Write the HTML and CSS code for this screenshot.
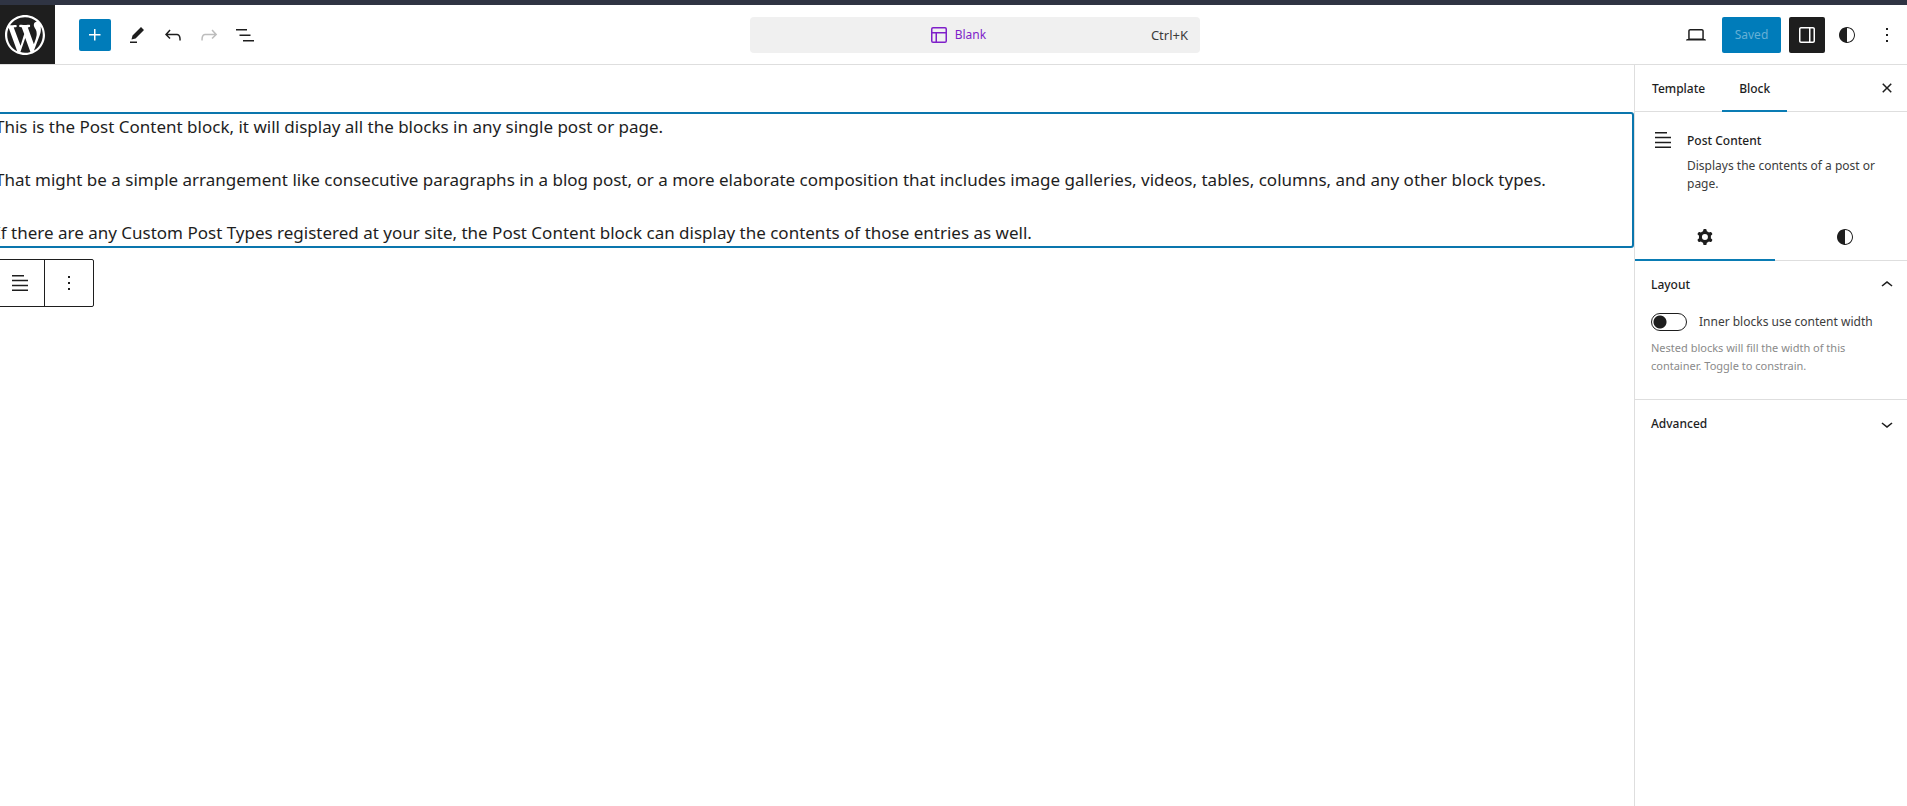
FILE: index.html
```html
<!DOCTYPE html>
<html lang="en">
<head>
<meta charset="utf-8">
<title>Blank</title>
<link rel="stylesheet" href="styles.css">
</head>
<body>
<div class="editor">
  <header class="header">
    <a class="site-hub" href="#" aria-label="Open navigation">
      <svg class="site-logo" viewBox="-2 -2 24 24"><path d="M20 10c0-5.51-4.49-10-10-10C4.48 0 0 4.49 0 10c0 5.52 4.48 10 10 10 5.51 0 10-4.48 10-10zM7.78 15.37L4.37 6.22c.55-.02 1.17-.08 1.17-.08.5-.06.44-1.13-.06-1.11 0 0-1.45.11-2.37.11-.18 0-.37 0-.58-.01C4.12 2.69 6.87 1.11 10 1.11c2.33 0 4.45.87 6.05 2.34-.68-.11-1.65.39-1.65 1.58 0 .74.45 1.36.9 2.1.35.61.55 1.36.55 2.46 0 1.49-1.4 5-1.4 5l-3.03-8.37c.54-.02.82-.17.82-.17.5-.05.44-1.25-.06-1.22 0 0-1.44.12-2.38.12-.87 0-2.33-.12-2.33-.12-.5-.03-.56 1.2-.06 1.22l.92.08 1.26 3.41zM17.41 10c.24-.64.74-1.87.43-4.25.7 1.29 1.05 2.71 1.05 4.25 0 3.29-1.73 6.24-4.4 7.78.97-2.59 1.94-5.2 2.92-7.78zM6.1 18.09C3.12 16.65 1.11 13.53 1.11 10c0-1.3.23-2.48.72-3.59C3.25 10.3 4.67 14.2 6.1 18.09zm4.03-6.63l2.58 6.98c-.86.29-1.76.45-2.71.45-.79 0-1.57-.11-2.29-.33.81-2.38 1.62-4.74 2.42-7.1z"/></svg>
    </a>
    <div class="tools">
      <button class="inserter" aria-label="Toggle block inserter"><svg class="icon" viewBox="0 0 24 24"><path d="M11 12.5V17.5H12.5V12.5H17.5V11H12.5V6H11V11H6V12.5H11Z"/></svg></button>
      <div class="tool-group">
        <button class="icon-button" aria-label="Tools"><svg class="icon" viewBox="0 0 24 24"><path d="m19 7-3-3-8.5 8.5-1 4 4-1L19 7Zm-7 11.5H5V20h7v-1.5Z"/></svg></button>
        <button class="icon-button" aria-label="Undo"><svg class="icon" viewBox="0 0 24 24"><path d="M18.3 11.7c-.6-.6-1.4-.9-2.3-.9H6.7l2.9-3.3-1.1-1-4.5 5L8.5 16l1-1-2.7-2.7H16c.5 0 .9.2 1.3.5 1 1 1 3.4 1 4.5v.3h1.5v-.2c0-1.5 0-4.3-1.5-5.7z"/></svg></button>
        <button class="icon-button" aria-label="Redo" disabled><svg class="icon" viewBox="0 0 24 24"><path d="M15.6 6.5l-1.1 1 2.9 3.3H8c-.9 0-1.7.3-2.3.9-1.4 1.5-1.4 4.2-1.4 5.6v.2h1.5v-.3c0-1.1 0-3.5 1-4.5.3-.3.7-.5 1.3-.5h9.2L14.5 15l1.1 1.1 4.6-4.6-4.6-5z"/></svg></button>
        <button class="icon-button" aria-label="List view"><svg class="icon" viewBox="0 0 24 24"><path d="M3 6h11v1.5H3V6Zm3.5 5.5h11V13h-11v-1.5ZM21 17H10v1.5h11V17Z"/></svg></button>
      </div>
    </div>
    <button class="command">
      <span class="command-title">
        <svg class="icon" viewBox="0 0 24 24"><path d="M18 5.5H6a.5.5 0 00-.5.5v3h13V6a.5.5 0 00-.5-.5zm.5 5H10v8h8a.5.5 0 00.5-.5v-7.5zm-10 0h-3V18a.5.5 0 00.5.5h2.5v-8zM6 4h12a2 2 0 012 2v12a2 2 0 01-2 2H6a2 2 0 01-2-2V6a2 2 0 012-2z"/></svg>
        <span>Blank</span>
      </span>
      <span class="shortcut">Ctrl+K</span>
    </button>
    <div class="actions">
      <button class="icon-button" aria-label="View"><svg class="icon" viewBox="0 0 24 24"><path d="M20.5 16h-.7V8c0-1.1-.9-2-2-2H6.2c-1.1 0-2 .9-2 2v8h-.7c-.8 0-1.5.7-1.5 1.5h20c0-.8-.7-1.5-1.5-1.5zM5.7 8c0-.3.2-.5.5-.5h11.6c.3 0 .5.2.5.5v7.6H5.7V8z"/></svg></button>
      <button class="save" disabled>Saved</button>
      <button class="icon-button pressed" aria-label="Settings" aria-pressed="true"><svg class="icon" viewBox="0 0 24 24"><path d="M18 4H6c-1.1 0-2 .9-2 2v12c0 1.1.9 2 2 2h12c1.1 0 2-.9 2-2V6c0-1.1-.9-2-2-2zm-4 14.5H6c-.3 0-.5-.2-.5-.5V6c0-.3.2-.5.5-.5h8v13zm4.5-.5c0 .3-.2.5-.5.5h-2.5v-13H18c.3 0 .5.2.5.5v12z"/></svg></button>
      <button class="icon-button" aria-label="Styles"><svg class="icon" viewBox="0 0 24 24"><path d="M12 4c-4.4 0-8 3.6-8 8v.1c0 4.1 3.2 7.5 7.2 7.9h.8c4.4 0 8-3.6 8-8s-3.6-8-8-8zm0 15V5c3.9 0 7 3.1 7 7s-3.1 7-7 7z"/></svg></button>
      <button class="icon-button" aria-label="Options"><svg class="icon" viewBox="0 0 24 24"><path d="M13 19h-2v-2h2v2zm0-6h-2v-2h2v2zm0-6h-2V5h2v2z"/></svg></button>
    </div>
  </header>
  <div class="body">
    <main class="canvas">
      <div class="post-content">
        <p>This is the Post Content block, it will display all the blocks in any single post or page.</p>
        <p>That might be a simple arrangement like consecutive paragraphs in a blog post, or a more elaborate composition that includes image galleries, videos, tables, columns, and any other block types.</p>
        <p>If there are any Custom Post Types registered at your site, the Post Content block can display the contents of those entries as well.</p>
      </div>
      <div class="block-toolbar">
        <button class="toolbar-button" aria-label="Post Content"><svg class="icon" viewBox="0 0 24 24"><path d="M4 20h16v-1.5H4V20zm0-4.8h16v-1.5H4v1.5zm0-6.4v1.5h16V8.8H4zM16 4H4v1.5h12V4z"/></svg></button>
        <button class="toolbar-button" aria-label="Options"><svg class="icon" viewBox="0 0 24 24"><path d="M13 19h-2v-2h2v2zm0-6h-2v-2h2v2zm0-6h-2V5h2v2z"/></svg></button>
      </div>
    </main>
    <aside class="sidebar">
      <div class="sidebar-header">
        <div class="tabs">
          <button class="tab">Template</button>
          <button class="tab active">Block</button>
        </div>
        <button class="icon-button" aria-label="Close Settings"><svg class="icon" viewBox="0 0 24 24"><path d="M12 13.06l3.712 3.713 1.061-1.06L13.061 12l3.712-3.712-1.06-1.06L12 10.938 8.288 7.227l-1.061 1.06L10.939 12l-3.712 3.712 1.06 1.061L12 13.061z"/></svg></button>
      </div>
      <section class="card">
        <svg class="icon" viewBox="0 0 24 24"><path d="M4 20h16v-1.5H4V20zm0-4.8h16v-1.5H4v1.5zm0-6.4v1.5h16V8.8H4zM16 4H4v1.5h12V4z"/></svg>
        <div class="card-text">
          <h2 class="title">Post Content</h2>
          <p class="description">Displays the contents of a post or page.</p>
        </div>
      </section>
      <div class="icon-tabs">
        <button class="icon-tab active" aria-label="Settings"><svg class="icon" viewBox="0 0 24 24"><path fill-rule="evenodd" d="M10.289 4.836A1 1 0 0111.275 4h1.306a1 1 0 01.987.836l.244 1.466c.787.26 1.503.679 2.108 1.218l1.393-.522a1 1 0 011.216.437l.653 1.13a1 1 0 01-.23 1.273l-1.148.944a6.025 6.025 0 010 2.435l1.149.946a1 1 0 01.23 1.272l-.653 1.13a1 1 0 01-1.216.437l-1.394-.522c-.605.54-1.32.958-2.108 1.218l-.244 1.466a1 1 0 01-.987.836h-1.306a1 1 0 01-.986-.836l-.244-1.466a5.995 5.995 0 01-2.108-1.218l-1.394.522a1 1 0 01-1.217-.436l-.653-1.131a1 1 0 01.23-1.272l1.149-.946a6.026 6.026 0 010-2.435l-1.148-.944a1 1 0 01-.23-1.272l.653-1.131a1 1 0 011.217-.437l1.393.522a5.994 5.994 0 012.108-1.218l.244-1.466zM14.929 12a3 3 0 11-6 0 3 3 0 016 0z"/></svg></button>
        <button class="icon-tab" aria-label="Styles"><svg class="icon" viewBox="0 0 24 24"><path d="M12 4c-4.4 0-8 3.6-8 8v.1c0 4.1 3.2 7.5 7.2 7.9h.8c4.4 0 8-3.6 8-8s-3.6-8-8-8zm0 15V5c3.9 0 7 3.1 7 7s-3.1 7-7 7z"/></svg></button>
      </div>
      <section class="panel">
        <h2 class="title"><button class="panel-toggle" aria-expanded="true">Layout<svg class="icon" viewBox="0 0 24 24"><path d="M6.5 12.4L12 8l5.5 4.4-.9 1.2L12 10l-4.5 3.6-1-1.2z"/></svg></button></h2>
        <div class="panel-body">
          <div class="toggle-row">
            <input class="toggle" type="checkbox" id="content-width">
            <label for="content-width">Inner blocks use content width</label>
          </div>
          <p class="help">Nested blocks will fill the width of this container. Toggle to constrain.</p>
        </div>
      </section>
      <section class="panel-last">
        <h2 class="title"><button class="panel-toggle" aria-expanded="false">Advanced<svg class="icon" viewBox="0 0 24 24"><path d="M17.5 11.6L12 16l-5.5-4.4.9-1.2L12 14l4.5-3.6 1 1.2z"/></svg></button></h2>
      </section>
    </aside>
  </div>
</div>
</body>
</html>
```
FILE: styles.css
```css
* { box-sizing: border-box; }

body {
  margin: 0;
  overflow: hidden;
  background: #fff;
  color: #1e1e1e;
  font: 12px/18px "Noto Sans", "Open Sans", sans-serif;
}

button {
  margin: 0;
  padding: 0;
  border: 0;
  background: none;
  color: inherit;
  font: inherit;
}

h2, p { margin: 0; }

.icon {
  display: block;
  flex: none;
  width: 24px;
  height: 24px;
  fill: currentColor;
}

/* The editor bleeds past both window edges. */
.editor {
  display: flex;
  flex-direction: column;
  min-height: 100vh;
  margin: 0 -8px 0 -5px;
  border-top: 5px solid #2f3443;
}

.header {
  display: flex;
  align-items: center;
  justify-content: space-between;
  height: 60px;
  padding-right: 10px;
  border-bottom: 1px solid #dedede;
}

.site-hub {
  display: flex;
  align-items: center;
  justify-content: center;
  flex: none;
  align-self: stretch;
  width: 60px;
  background: #1e1e1e;
}

.site-logo {
  width: 48px;
  height: 48px;
  fill: #fff;
}

.tools {
  display: flex;
  align-items: center;
  gap: 8px;
  margin: 0 auto 0 24px;
  padding-right: 9px;
}

.tool-group, .actions { display: flex; align-items: center; }
.actions { gap: 4px; margin-left: auto; }

.inserter, .icon-button {
  display: flex;
  align-items: center;
  justify-content: center;
  flex: none;
  width: 36px;
  height: 36px;
  border-radius: 2px;
}

.inserter {
  width: 32px;
  height: 32px;
  background: #007cba;
  color: #fff;
}

.icon-button:disabled { color: #bdbdbd; }
.icon-button.pressed { background: #1e1e1e; color: #fff; }

.command {
  display: flex;
  align-items: center;
  width: 450px;
  height: 36px;
  padding: 0 12px;
  border-radius: 4px;
  background: #f0f0f0;
}

.command-title {
  display: flex;
  flex: 1;
  align-items: center;
  justify-content: center;
  gap: 4px;
  color: #7f1fc9;
}

.shortcut { color: #3c3c3c; font-size: 13px; }

.save {
  min-width: 59px;
  height: 36px;
  margin: 0 4px;
  padding: 0 12px;
  border-radius: 2px;
  background: #007cba;
  color: #66b0d6;
}

.body { display: flex; flex: 1; }

.canvas {
  flex: 1;
  min-width: 0;
  padding: 48px 1px 0 0;
}

.post-content {
  display: flex;
  flex-direction: column;
  gap: 25px;
  outline: 2px solid #0a76ad;
  outline-offset: -1px;
  border-radius: 2px;
  font-size: 17px;
  line-height: 28px;
}

.block-toolbar {
  display: inline-flex;
  margin-top: 12px;
  border: 1px solid #1e1e1e;
  border-radius: 2px;
}

.toolbar-button {
  display: flex;
  align-items: center;
  justify-content: center;
  width: 48px;
  height: 46px;
}

.toolbar-button + .toolbar-button {
  width: 49px;
  border-left: 1px solid #1e1e1e;
}

.sidebar {
  flex: none;
  width: 281px;
  border-left: 1px solid #dedede;
}

.sidebar-header {
  display: flex;
  align-items: center;
  justify-content: space-between;
  height: 47px;
  padding-right: 10px;
  border-bottom: 1px solid #dedede;
}

.tabs { display: flex; align-self: stretch; }

.tab {
  height: 47px;
  padding: 0 17px;
  font-weight: 500;
}

.tab.active, .icon-tab.active { box-shadow: inset 0 -2px #0a7cb4; }

.card {
  display: flex;
  gap: 12px;
  padding: 16px 32px 16px 16px;
}

.card-text { padding-top: 4px; }
.title { font-size: 12px; font-weight: 500; }
.description { margin-top: 7px; color: #3c3c3c; }

.icon-tabs {
  display: flex;
  margin-top: 4px;
  border-bottom: 1px solid #dedede;
}

.icon-tab {
  display: flex;
  align-items: center;
  justify-content: center;
  flex: 1;
  height: 48px;
  margin-bottom: -1px;
}

.panel { border-bottom: 1px solid #dedede; }

.panel-toggle {
  display: flex;
  align-items: center;
  justify-content: space-between;
  width: 100%;
  height: 48px;
  padding: 0 16px;
}

.panel-body { padding: 4px 32px 24px 16px; }

.toggle-row {
  display: flex;
  align-items: center;
  gap: 12px;
  color: #3c3c3c;
}

.toggle {
  appearance: none;
  flex: none;
  width: 36px;
  height: 18px;
  margin: 0;
  border: 1px solid #1e1e1e;
  border-radius: 9px;
  background: radial-gradient(circle at 8px 8px, #1e1e1e 6px, transparent 7px);
}

.help {
  margin-top: 8px;
  color: #8a8a8a;
  font-size: 11px;
}
```
